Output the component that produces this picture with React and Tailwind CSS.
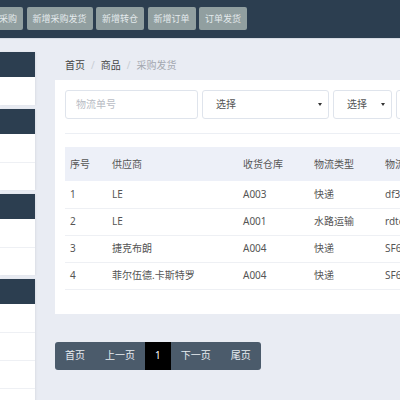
import React from "react";

const topButtons = ["新增采购", "新增采购发货", "新增转仓", "新增订单", "订单发货"];

const sideGroups = [1, 2, 2, 4];

const rows = [
  ["1", "LE", "A003", "快递", "df3428765"],
  ["2", "LE", "A001", "水路运输", "rdte3456"],
  ["3", "捷克布朗", "A004", "快递", "SF6523890"],
  ["4", "菲尔伍德.卡斯特罗", "A004", "快递", "SF6523891"],
];

function Caret() {
  return (
    <span className="block w-0 h-0 border-l-[2.5px] border-r-[2.5px] border-t-[3.5px] border-l-transparent border-r-transparent border-t-[#333]" />
  );
}

function Select({ width }) {
  return (
    <div
      className={`${width} h-[29px] shrink-0 flex items-center justify-between pl-[13px] pr-[6px] border border-[#dfe4ec] rounded-[3px] bg-white text-[10px] text-[#555]`}
    >
      <span>选择</span>
      <Caret />
    </div>
  );
}

export default function App() {
  return (
    <div
      className="w-[400px] h-[400px] overflow-hidden bg-[#e9ecf3]"
      style={{ fontFamily: '"Noto Sans", "Noto Sans CJK SC", sans-serif' }}
    >
      {/* top action bar */}
      <header className="h-[39px] bg-[#2c3e50] border-b border-[#d6dbe3] flex items-start pt-[7px] gap-[3.5px] ml-[-25px]">
        {topButtons.map((b) => (
          <button
            key={b}
            className="h-[23px] px-[6px] rounded-[2px] bg-[#919fa0] text-[9px] leading-[23px] text-[#e4eaec] whitespace-nowrap"
          >
            {b}
          </button>
        ))}
      </header>

      <div className="flex">
        {/* side menu */}
        <aside className="w-[35px] shrink-0 pt-[13px] flex flex-col gap-[4px]">
          {sideGroups.map((n, gi) => (
            <div key={gi} className="bg-white shadow-[1px_0_2px_rgba(0,0,0,0.06)]">
              <div className="h-[25px] bg-[#2c3e50]" />
              {Array.from({ length: n }).map((_, i) => (
                <div
                  key={i}
                  className={`h-[28px] ${i > 0 ? "border-t border-[#eef0f4]" : ""}`}
                />
              ))}
            </div>
          ))}
        </aside>

        {/* main content */}
        <main className="ml-[20px] w-[600px] shrink-0">
          <nav className="h-[41px] pt-[19px] pl-[10px] flex gap-[6px] text-[10px] leading-[14px]">
            <span className="text-[#444]">首页</span>
            <span className="text-[#c8ccd4]">/</span>
            <span className="text-[#444]">商品</span>
            <span className="text-[#c8ccd4]">/</span>
            <span className="text-[#a4a8b0]">采购发货</span>
          </nav>

          <section className="bg-white pt-[10px] pl-[10px] pb-[24px]">
            <div className="flex gap-[4px]">
              <div className="w-[133px] h-[29px] shrink-0 flex items-center pl-[10px] border border-[#dfe4ec] rounded-[3px] text-[10px] text-[#b8bcc4]">
                物流单号
              </div>
              <Select width="w-[127px]" />
              <Select width="w-[59px]" />
              <Select width="w-[127px]" />
            </div>

            <div className="mt-[14px] border-t border-[#eceff4]" />

            <table className="mt-[13px] w-[560px] table-fixed border-collapse text-[10px] text-[#555]">
              <colgroup>
                <col className="w-[47px]" />
                <col className="w-[131px]" />
                <col className="w-[71px]" />
                <col className="w-[71px]" />
                <col />
              </colgroup>
              <thead>
                <tr className="h-[34px] bg-[#edf0f8]">
                  <th className="pl-[5px] text-left font-normal">序号</th>
                  <th className="text-left font-normal">供应商</th>
                  <th className="text-left font-normal">收货仓库</th>
                  <th className="text-left font-normal">物流类型</th>
                  <th className="text-left font-normal">物流单号</th>
                </tr>
              </thead>
              <tbody>
                {rows.map((r) => (
                  <tr key={r[0]} className="h-[27px] border-b border-[#eef0f4]">
                    <td className="pl-[5px]">{r[0]}</td>
                    <td>{r[1]}</td>
                    <td>{r[2]}</td>
                    <td>{r[3]}</td>
                    <td>{r[4]}</td>
                  </tr>
                ))}
              </tbody>
            </table>
          </section>

          {/* pager */}
          <div className="mt-[28px] inline-flex h-[28px] rounded-[3px] bg-[#4b5b6b] text-[10px] text-[#e8edf1] overflow-hidden">
            <span className="px-[10px] flex items-center">首页</span>
            <span className="px-[10px] flex items-center">上一页</span>
            <span className="px-[10px] flex items-center bg-black text-white">1</span>
            <span className="px-[10px] flex items-center">下一页</span>
            <span className="px-[10px] flex items-center">尾页</span>
          </div>
        </main>
      </div>
    </div>
  );
}
